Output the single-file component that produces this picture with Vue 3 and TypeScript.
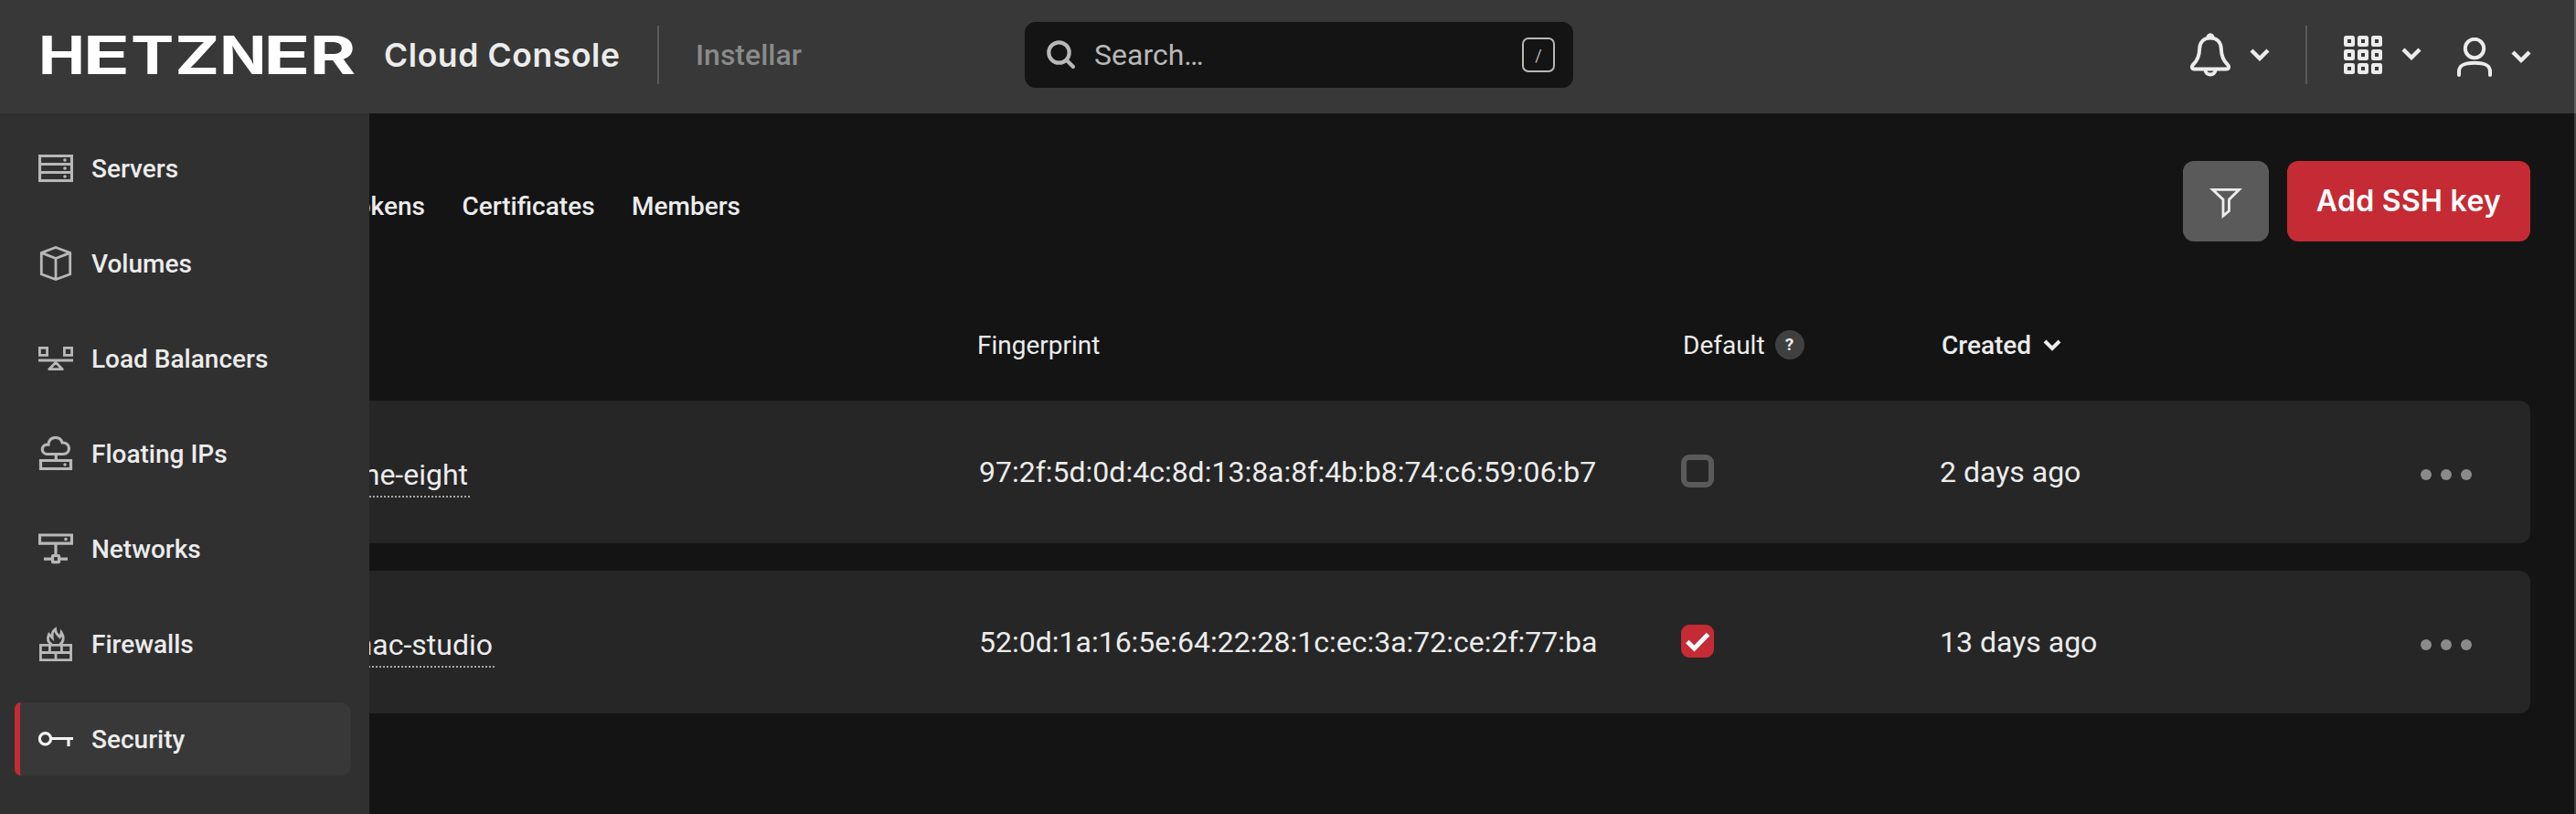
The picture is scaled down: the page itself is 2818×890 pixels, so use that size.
<script setup lang="ts">
interface LogoLetter {
  char: string
  x: number
  width: number
}

interface NavItem {
  label: string
  icon: string
  active?: boolean
}

interface SshKey {
  name: string
  nameWidth: number
  fingerprint: string
  isDefault: boolean
  created: string
}

const logo: LogoLetter[] = [
  { char: 'H', x: -4, width: 51 },
  { char: 'E', x: 44.7, width: 51.3 },
  { char: 'T', x: 96.9, width: 47.3 },
  { char: 'Z', x: 145.3, width: 49 },
  { char: 'N', x: 194.3, width: 51 },
  { char: 'E', x: 242.3, width: 51.3 },
  { char: 'R', x: 292.7, width: 50.5 },
]

const navItems: NavItem[] = [
  { label: 'Servers', icon: 'server' },
  { label: 'Volumes', icon: 'volume' },
  { label: 'Load Balancers', icon: 'balancer' },
  { label: 'Floating IPs', icon: 'floating' },
  { label: 'Networks', icon: 'network' },
  { label: 'Firewalls', icon: 'firewall' },
  { label: 'Security', icon: 'key', active: true },
]

const tabs: string[] = ['API tokens', 'Certificates', 'Members']

const keys: SshKey[] = [
  {
    name: 'one-eight',
    nameWidth: 110,
    fingerprint: '97:2f:5d:0d:4c:8d:13:8a:8f:4b:b8:74:c6:59:06:b7',
    isDefault: false,
    created: '2 days ago',
  },
  {
    name: 'mac-studio',
    nameWidth: 137,
    fingerprint: '52:0d:1a:16:5e:64:22:28:1c:ec:3a:72:ce:2f:77:ba',
    isDefault: true,
    created: '13 days ago',
  },
]

const gridCells: number[] = [2, 17, 32]
</script>

<template>
  <div class="app">
    <header class="topbar">
      <div class="brand">
        <svg class="logo" width="360" height="84" viewBox="-8 -20 360 84">
          <text
            v-for="letter in logo"
            :key="letter.x"
            class="logo-text"
            :x="letter.x"
            y="43"
            :textLength="letter.width"
            lengthAdjust="spacingAndGlyphs"
          >{{ letter.char }}</text>
        </svg>
        <span class="product">Cloud Console</span>
        <span class="divider"></span>
        <span class="project">Instellar</span>
      </div>

      <div class="search">
        <svg class="search-icon" width="32" height="32" viewBox="0 0 32 32">
          <circle cx="13.5" cy="13.5" r="11.2" />
          <path d="M22 22l7 7" />
        </svg>
        <span class="search-text">Search…</span>
        <kbd class="slash">/</kbd>
      </div>

      <div class="actions">
        <svg class="bell" width="44" height="48" viewBox="0 0 44 48">
          <path d="M22 5.500C14.500 5.500 10.500 10.500 10.200 17C10 25 8 30 3.500 34.200C.8 36.800 1.800 39.500 4.500 39.500H39.500C42.200 39.500 43.200 36.800 40.500 34.200C36 30 34 25 33.800 17C33.500 10.500 29.500 5.500 22 5.500Z" />
          <path d="M19.500 5.200a2.500 3 0 0 1 5 0M16.500 40.500a5.500 4.900 0 0 0 11 0" />
        </svg>
        <svg class="chevron c-bell" width="22" height="16" viewBox="0 0 22 16"><path d="M2 3l9 9 9-9" /></svg>
        <span class="divider"></span>
        <svg class="apps" width="42" height="42" viewBox="0 0 42 42">
          <template v-for="y in gridCells" :key="y">
            <rect v-for="x in gridCells" :key="x" :x="x" :y="y" width="8" height="8" rx="0.5" />
          </template>
        </svg>
        <svg class="chevron c-apps" width="22" height="16" viewBox="0 0 22 16"><path d="M2 3l9 9 9-9" /></svg>
        <svg class="user" width="38" height="44" viewBox="0 0 38 44">
          <circle cx="19" cy="12" r="10.200" />
          <path d="M2 41V37.500C2 30 8 27.800 19 27.800S36 30 36 37.500V41" />
        </svg>
        <svg class="chevron c-user" width="22" height="16" viewBox="0 0 22 16"><path d="M2 3l9 9 9-9" /></svg>
      </div>
    </header>

    <div class="body">
      <aside class="sidebar">
        <nav class="nav">
          <a v-for="item in navItems" :key="item.label" class="nav-item" :class="{ active: item.active }">
            <svg class="nav-icon" width="38" height="38" viewBox="0 0 38 38">
              <g v-if="item.icon === 'server'">
                <path d="M1.500 5.500h35v27h-35zM1.500 14.500h35M1.500 23.500h35" />
                <circle class="dot" cx="29" cy="10" r="1.800" />
                <circle class="dot" cx="29" cy="19" r="1.800" />
                <circle class="dot" cx="29" cy="28" r="1.800" />
              </g>
              <path v-else-if="item.icon === 'volume'" class="thin" d="M19 1.500L34.700 7.400V30.800L19 36.500L3.300 30.800V7.400ZM3.300 7.400L19 13.500L34.700 7.400M19 13.500V36.500" />
              <g v-else-if="item.icon === 'balancer'" class="thin">
                <rect x="1.400" y="7.400" width="8.200" height="8" />
                <rect x="28.400" y="7.400" width="8.200" height="8" />
                <path d="M0 21h38" />
                <path d="M19 23.200l7.300 7.500H11.700z" stroke-linejoin="round" />
              </g>
              <g v-else-if="item.icon === 'floating'">
                <path d="M9.500 19.500a5.200 5.200 0 0 1 0-10.400h1.400C10.900 4.700 14.300 1.500 18.500 1.500c3.800 0 6.600 2.100 7.700 5.500c4.200-.2 7.300 2.500 7.300 6.300c0 3.700-2.800 6.200-6.500 6.200z" />
                <path d="M19.300 20v6M2.500 26.500h33v9h-33z" />
                <circle class="dot" cx="29" cy="31" r="1.700" />
              </g>
              <g v-else-if="item.icon === 'network'">
                <path d="M1.500 4h35v9.200h-35zM19 13v13M6 30.200h9M23 30.200h9" />
                <rect x="15.500" y="26.500" width="7" height="7.200" rx="0.500" />
                <circle class="dot" cx="30" cy="8.600" r="1.800" />
              </g>
              <g v-else-if="item.icon === 'firewall'" class="thin">
                <path d="M2.400 20.300h33.200v16.300H2.400zM2.400 28.500h33.200M12.400 20v8.500M25.400 20v8.500M19 28.500v8" />
                <path d="M14.500 19.500C10 17 9.800 12.500 11.500 8.500L15.200 12.300C14.500 7.500 16 4.500 18.500 2.800C18.500 6 19.800 7.800 21.500 9.500L23.500 11.500C24.800 9.500 25 8 25.200 6.500C28.300 11 28 17 23.500 19.500" />
              </g>
              <g v-else>
                <circle cx="7.500" cy="18.800" r="6.100" />
                <path d="M14.500 18.500H38M33 19v8" />
              </g>
            </svg>
            <span>{{ item.label }}</span>
          </a>
        </nav>
      </aside>

      <main class="main">
        <div class="toolbar">
          <nav class="tabs">
            <a v-for="tab in tabs" :key="tab" class="tab">{{ tab }}</a>
          </nav>
          <div class="buttons">
            <button class="filter" type="button" aria-label="Filter">
              <svg width="36" height="34" viewBox="0 0 36 34">
                <path d="M3.500 2.300H32.500L21.500 13.200V25.500L15 31V13.200Z" />
              </svg>
            </button>
            <button class="add" type="button">Add SSH key</button>
          </div>
        </div>

        <div class="columns head">
          <span></span>
          <span class="head-cell fingerprint-head">Fingerprint</span>
          <span class="head-cell default-head">Default <i class="help">?</i></span>
          <span class="head-cell sorted">
            Created
            <svg width="20" height="14" viewBox="0 0 20 14"><path d="M2 3l8 8 8-8" /></svg>
          </span>
          <span></span>
        </div>

        <div v-for="key in keys" :key="key.fingerprint" class="columns row">
          <div class="name" :style="{ width: key.nameWidth + 'px' }">
            <a class="name-link">{{ key.name }}</a>
          </div>
          <span class="fingerprint">{{ key.fingerprint }}</span>
          <span class="check" :class="{ on: key.isDefault }">
            <svg v-if="key.isDefault" width="36" height="36" viewBox="0 0 36 36"><path d="M6.800 18.500L14.500 26L29.500 10.500" /></svg>
          </span>
          <span class="created">{{ key.created }}</span>
          <span class="more"><i></i><i></i><i></i></span>
        </div>
      </main>
    </div>
  </div>
</template>

<style>
body {
  background: #141414;
}
</style>

<style scoped>
.app {
  box-sizing: border-box;
  width: 2818px;
  height: 890px;
  overflow: hidden;
  background: #141414;
  color: #ececec;
  font-family: Roboto, "Liberation Sans", sans-serif;
  font-size: 28px;
  display: flex;
  flex-direction: column;
}

svg {
  display: block;
  flex: none;
  fill: none;
}

.topbar {
  box-sizing: border-box;
  height: 124px;
  flex: none;
  display: grid;
  grid-template-columns: 1121px 600px 1fr;
  background: #383838;
  border-right: 2px solid #5f5f5f;
  padding-bottom: 4px;
  align-items: center;
}

.brand {
  display: flex;
  align-items: center;
  padding-left: 38px;
}

.logo-text {
  font-family: Inter, sans-serif;
  font-weight: 700;
  font-size: 57.5px;
  fill: #fff;
}

.product {
  font-family: Inter, sans-serif;
  font-weight: 600;
  font-size: 35.5px;
  letter-spacing: 0.6px;
  width: 299px;
  margin-left: 22px;
  white-space: nowrap;
}

.divider {
  width: 2px;
  height: 64px;
  background: #5a5a5a;
  flex: none;
}

.project {
  margin-left: 40px;
  font-size: 32px;
  font-weight: 500;
  color: #8a8a8a;
}

.search {
  box-sizing: border-box;
  height: 72px;
  border-radius: 12px;
  background: #141414;
  display: flex;
  align-items: center;
  padding: 0 20px 0 24px;
  color: #b8b8b8;
}

.search-icon {
  stroke: #b8b8b8;
  stroke-width: 4.2;
  stroke-linecap: round;
}

.search-text {
  font-size: 32px;
  margin-left: 20px;
  flex: 1;
}

.slash {
  box-sizing: border-box;
  width: 36px;
  height: 38px;
  border: 2px solid #b8b8b8;
  border-radius: 7px;
  display: flex;
  align-items: center;
  justify-content: center;
  font: 18px Roboto, sans-serif;
}

.actions {
  display: flex;
  align-items: center;
  padding-left: 675px;
}

.actions svg {
  stroke: #ececec;
}

.bell {
  stroke-width: 4;
}

.chevron {
  stroke-width: 4.4;
}

.c-bell {
  margin: 0 39px 0 21px;
}

.apps {
  margin-left: 40px;
  stroke-width: 4;
  stroke-linejoin: round;
}

.c-apps {
  margin: 0 39px 2px 21px;
}

.user {
  stroke-width: 4;
  stroke-linecap: round;
  margin-top: 5px;
}

.c-user {
  margin: 3px 0 0 21px;
}

.body {
  flex: 1;
  display: flex;
  min-height: 0;
}

.sidebar {
  width: 404px;
  box-sizing: border-box;
  flex: none;
  background: #303030;
  padding: 20px 20px 0 16px;
}

.nav {
  display: flex;
  flex-direction: column;
  gap: 24px;
}

.nav-item {
  box-sizing: border-box;
  height: 80px;
  display: flex;
  align-items: center;
  gap: 20px;
  padding-left: 20px;
  border-left: 6px solid transparent;
  font-weight: 500;
}

.nav-item.active {
  background: #383838;
  border-left-color: #c42b35;
  border-radius: 7px 12px 12px 7px;
}

.nav-icon {
  stroke: #b8b8b8;
  stroke-width: 3.2;
}

.nav-icon .thin {
  stroke-width: 2.8;
}

.nav-icon .dot {
  fill: #b8b8b8;
  stroke: none;
}

.active .nav-icon {
  stroke: #f2f2f2;
}

.main {
  box-sizing: border-box;
  flex: 1;
  min-width: 0;
  overflow: hidden;
  padding: 52px 48px 0 0;
  border-right: 2px solid #404040;
}

.toolbar {
  height: 88px;
  display: flex;
  justify-content: space-between;
}

.tabs {
  width: 406px;
  display: flex;
  justify-content: flex-end;
  align-items: center;
  gap: 40.5px;
  padding-top: 10px;
  font-weight: 500;
}

.tab {
  flex: none;
  white-space: nowrap;
}

.buttons {
  display: flex;
  gap: 20px;
}

.buttons button {
  border: 0;
  border-radius: 12px;
  padding: 0;
  display: flex;
  align-items: center;
  justify-content: center;
}

.buttons .filter {
  width: 94px;
  background: #5a5a5a;
}

.filter svg {
  stroke: #ececec;
  stroke-width: 2.8;
  margin-top: 4px;
}

.buttons .add {
  width: 266px;
  padding-bottom: 1px;
  background: #c42b35;
  color: #fff;
  font: 600 32px Inter, sans-serif;
  letter-spacing: 0.3px;
}

.columns {
  display: grid;
  grid-template-columns: 667px 768px 283px 1fr auto;
  align-items: center;
}

.head {
  box-sizing: border-box;
  height: 174px;
  padding-top: 52px;
  align-items: start;
}

.head-cell {
  height: 122px;
  display: flex;
  align-items: center;
}

.fingerprint-head {
  margin-left: -2px;
}

.default-head {
  padding-left: 2px;
}

.help {
  width: 32px;
  height: 32px;
  margin-left: 11px;
  border-radius: 50%;
  background: #404040;
  font-size: 19px;
  font-style: normal;
  font-weight: 700;
  line-height: 32px;
  text-align: center;
}

.sorted {
  font-weight: 500;
  padding-left: 2px;
}

.sorted svg {
  margin-left: 13px;
  stroke: #ececec;
  stroke-width: 4;
}

.row {
  height: 156px;
  background: #262626;
  border-radius: 0 12px 12px 0;
  margin-bottom: 30px;
  font-size: 32px;
}

.name {
  display: flex;
  justify-content: flex-end;
  padding-top: 9px;
}

.name-link {
  flex: none;
  padding: 0 2px 1px 0;
  line-height: 43px;
  border-bottom: 2px dotted #a8a8a8;
}

.check {
  box-sizing: border-box;
  width: 36px;
  height: 36px;
  margin-bottom: 2px;
  border: 6px solid #5a5a5a;
  border-radius: 9px;
}

.check.on {
  border: 0;
  background: #c42b35;
}

.check svg {
  stroke: #fff;
  stroke-width: 5;
}

.more {
  display: flex;
  gap: 10px;
  padding: 6px 64px 0 0;
}

.more i {
  width: 12px;
  height: 12px;
  border-radius: 50%;
  background: #8a8a8a;
}
</style>
